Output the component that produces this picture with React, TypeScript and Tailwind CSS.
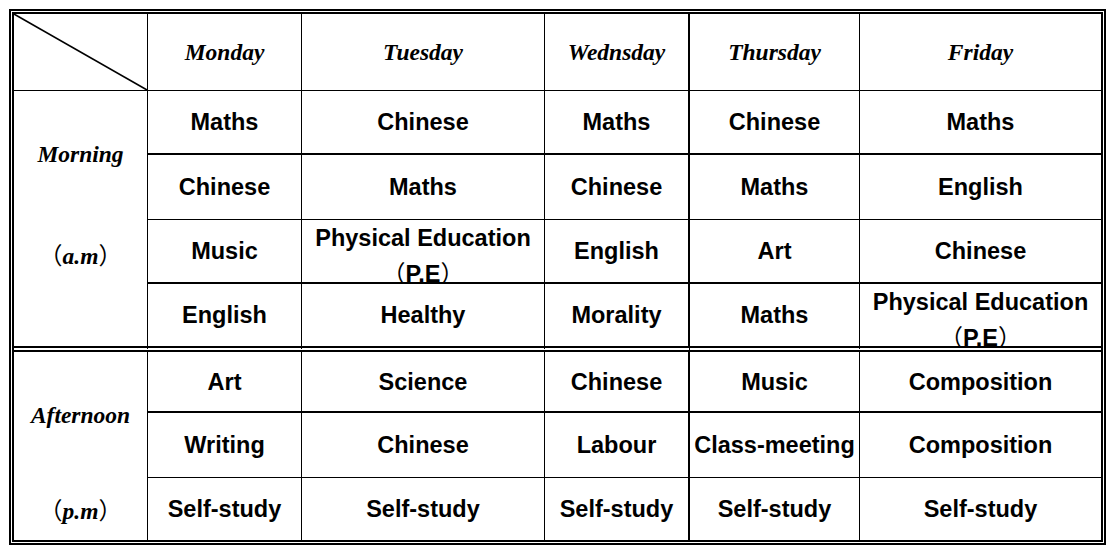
const days = ["Monday", "Tuesday", "Wednsday", "Thursday", "Friday"];

const PE = "PE";

const morning = [
  ["Maths", "Chinese", "Maths", "Chinese", "Maths"],
  ["Chinese", "Maths", "Chinese", "Maths", "English"],
  ["Music", PE, "English", "Art", "Chinese"],
  ["English", "Healthy", "Morality", "Maths", PE],
];

const afternoon = [
  ["Art", "Science", "Chinese", "Music", "Composition"],
  ["Writing", "Chinese", "Labour", "Class-meeting", "Composition"],
  ["Self-study", "Self-study", "Self-study", "Self-study", "Self-study"],
];

// right border per column (col 0 is the label column)
const colBorder = ["border-r", "border-r", "border-r", "border-r-2", "border-r", ""];

const morningBottom = ["border-b-2", "border-b", "border-b-2", "border-b-[6px] border-double"];
const afternoonBottom = ["border-b-2", "border-b", ""];

const serif = "font-['Liberation_Serif','Noto_Sans_CJK_SC',serif] italic font-bold";
const sans = "font-['Liberation_Sans','Noto_Sans_CJK_SC',sans-serif] font-bold";

function Lesson({ name, col, bottom }: { name: string; col: number; bottom: string }) {
  if (name === PE) {
    return (
      <div
        className={`flex flex-col items-center justify-start overflow-hidden border-black text-center ${colBorder[col]} ${bottom}`}
      >
        <div className="leading-[36px] whitespace-nowrap">Physical Education</div>
        <div className="leading-[36px] whitespace-nowrap">
          <span className="font-normal">（</span>P.E<span className="font-normal">）</span>
        </div>
      </div>
    );
  }
  return (
    <div
      className={`flex items-center justify-center overflow-hidden border-black leading-[32px] whitespace-nowrap ${colBorder[col]} ${bottom}`}
    >
      {name}
    </div>
  );
}

function Label({ title, abbr, gap, bottom }: { title: string; abbr: string; gap: string; bottom: string }) {
  return (
    <div className={`flex flex-col items-center border-r border-black pt-[47px] ${serif} ${bottom}`}>
      <div className="leading-[32px]">{title}</div>
      <div className={`leading-[32px] ${gap}`}>
        <span className="font-['Noto_Sans_CJK_SC',sans-serif] font-normal not-italic">（</span>
        {abbr}
        <span className="font-['Noto_Sans_CJK_SC',sans-serif] font-normal not-italic">）</span>
      </div>
    </div>
  );
}

export default function App() {
  return (
    <div className="min-h-screen bg-white text-black">
      <div className="ml-[9px] pt-[9px]">
        <div className="w-[1097px] border-2 border-black p-px">
          <div
            className={`grid grid-cols-[134px_154px_243px_145px_170px_241px] grid-rows-[77px_64px_65px_64px_68px_61px_65px_62px] border-2 border-black text-[23.5px] ${sans}`}
          >
            {/* corner cell with the diagonal */}
            <div className="relative border-r border-b border-black">
              <svg className="absolute inset-0 h-full w-full" viewBox="0 0 134 77" preserveAspectRatio="none">
                <line x1="0" y1="0" x2="134" y2="77" stroke="#000" strokeWidth="1.6" />
              </svg>
            </div>
            {days.map((d, i) => (
              <div
                key={d}
                className={`flex items-center justify-center border-b border-black leading-[32px] ${serif} ${colBorder[i + 1]}`}
              >
                {d}
              </div>
            ))}

            <Label title="Morning" abbr="a.m" gap="mt-[68px]" bottom="row-span-4 border-b-[6px] border-double" />
            {morning.map((row, r) =>
              row.map((name, c) => (
                <Lesson key={`m${r}-${c}`} name={name} col={c + 1} bottom={morningBottom[r]} />
              ))
            )}

            <Label title="Afternoon" abbr="p.m" gap="mt-[62px]" bottom="row-span-3" />
            {afternoon.map((row, r) =>
              row.map((name, c) => (
                <Lesson key={`a${r}-${c}`} name={name} col={c + 1} bottom={afternoonBottom[r]} />
              ))
            )}
          </div>
        </div>
      </div>
    </div>
  );
}
